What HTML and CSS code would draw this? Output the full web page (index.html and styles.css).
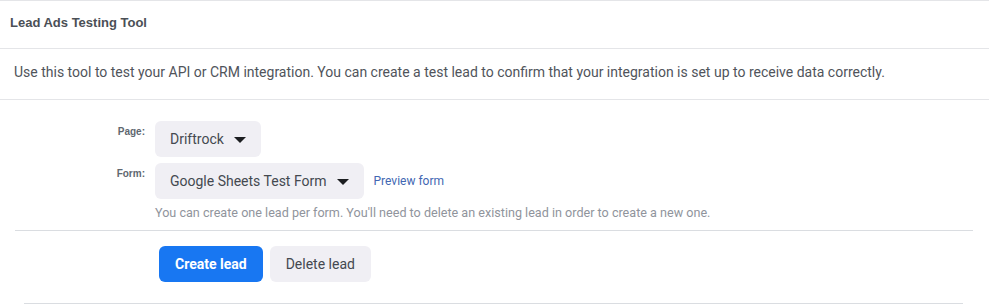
FILE: index.html
```html
<!DOCTYPE html>
<html>
<head>
<meta charset="utf-8">
<link rel="stylesheet" href="styles.css">
</head>
<body>
<div class="panel">
  <div class="header">Lead Ads Testing Tool</div>
  <div class="desc">Use this tool to test your API or CRM integration. You can create a test lead to confirm that your integration is set up to receive data correctly.</div>
  <div class="form">
    <div class="row row-page">
      <div class="label">Page:</div>
      <div class="field">
        <button class="select">Driftrock <span class="caret"></span></button>
      </div>
    </div>
    <div class="row row-form">
      <div class="label">Form:</div>
      <div class="field">
        <button class="select">Google Sheets Test Form <span class="caret"></span></button>
        <a class="link">Preview form</a>
      </div>
    </div>
    <div class="help">You can create one lead per form. You'll need to delete an existing lead in order to create a new one.</div>
  </div>
  <div class="actions">
    <button class="btn primary">Create lead</button>
    <button class="btn secondary">Delete lead</button>
  </div>
  <div class="footer-line"></div>
</div>
</body>
</html>
```
FILE: styles.css
```css
* { box-sizing: border-box; }
html, body { margin: 0; padding: 0; background: #fff; }
body { font-family: Roboto, "Liberation Sans", sans-serif; color: #4b4f56; }

.panel { width: 989px; }

.header {
  height: 49px;
  border-top: 1px solid #e4e5e8;
  border-bottom: 1px solid #e4e5e8;
  padding: 14px 0 0 10px;
  font-family: "Liberation Sans", Arial, sans-serif;
  font-weight: bold;
  font-size: 13px;
  color: #4b4f56;
}

.desc {
  height: 51px;
  border-bottom: 1px solid #e4e5e8;
  padding: 15px 0 0 14px;
  font-size: 14px;
  line-height: 17px;
  color: #50545b;
}

.form { padding: 21px 0 0 0; }

.row { display: flex; align-items: flex-start; }
.row-form { margin-top: 6px; }

.label {
  width: 145px;
  text-align: right;
  padding-top: 5px;
  font-family: "Liberation Sans", Arial, sans-serif;
  font-weight: bold;
  font-size: 10px;
  color: #606770;
}

.field {
  margin-left: 10px;
  display: flex;
  align-items: center;
}

.select {
  height: 36px;
  border: none;
  border-radius: 6px;
  background: #f0eff4;
  font-family: Roboto, sans-serif;
  font-size: 14px;
  color: #444950;
  padding: 0 15px 0 15px;
  display: flex;
  align-items: center;
  gap: 10px;
}

.caret {
  width: 0; height: 0;
  border-left: 6px solid transparent;
  border-right: 6px solid transparent;
  border-top: 6px solid #1c1e21;
  margin-top: 1px;
}

.link {
  margin-left: 10px;
  font-size: 12px;
  color: #4267b2;
}

.help {
  margin: 7px 0 0 155px;
  font-size: 12.6px;
  color: #90949c;
  line-height: 13px;
}

.actions {
  margin: 11px 16px 0 15px;
  border-top: 1px solid #dadde1;
  padding: 15px 0 0 144px;
  display: flex;
  gap: 7px;
}

.btn {
  height: 36px;
  border: none;
  border-radius: 6px;
  font-family: Roboto, sans-serif;
  font-size: 14px;
  padding: 0 16px;
}
.primary { background: #1877f2; color: #fff; font-weight: bold; }
.secondary { background: #f0eff4; color: #444950; }

.footer-line {
  margin: 21px 26px 0 24px;
  border-top: 1px solid #dadde1;
}
```
